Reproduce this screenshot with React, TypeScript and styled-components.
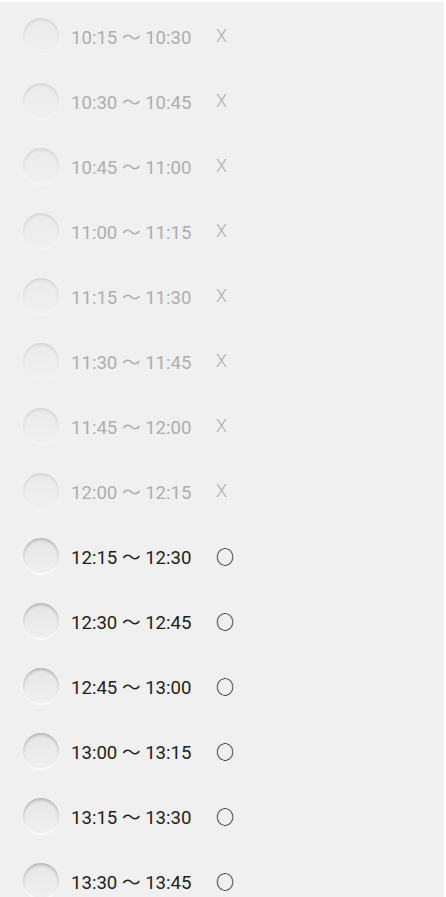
import React from "react";
import styled, { createGlobalStyle } from "styled-components";

const GlobalStyle = createGlobalStyle`
  html, body {
    margin: 0;
    padding: 0;
    background: #ffffff;
  }
  body {
    font-family: Roboto, "Noto Sans CJK JP", sans-serif;
  }
`;

const Page = styled.div`
  margin-top: 2px;
  width: 444px;
  height: 895px;
  overflow: hidden;
  background: #f0f0f0;
  padding-top: 1px;
  box-sizing: border-box;
`;

const SlotList = styled.ul`
  list-style: none;
  margin: 0;
  padding: 0 0 0 23px;
  display: flex;
  flex-direction: column;
`;

const SlotRow = styled.li<{ disabled?: boolean }>`
  height: 65px;
  display: flex;
  align-items: center;
  gap: 12px;
  color: ${({ disabled }) => (disabled ? "#aeaeae" : "#1e1e1e")};
`;

const Radio = styled.span<{ disabled?: boolean }>`
  flex: none;
  width: 36px;
  height: 36px;
  border-radius: 50%;
  background: linear-gradient(180deg, #e6e6e6 0%, #ececec 60%, #efefef 100%);
  box-shadow: inset 0 2px 3px rgba(0, 0, 0, 0.22),
    inset 0 -1px 1px rgba(255, 255, 255, 0.9), 0 1px 1px rgba(255, 255, 255, 1);
  opacity: ${({ disabled }) => (disabled ? 0.45 : 1)};
`;

const TimeText = styled.span`
  font-family: Roboto, "Noto Sans CJK JP", sans-serif;
  font-size: 18.6px;
  white-space: nowrap;
  width: 133px;
`;

const Mark = styled.span<{ disabled?: boolean }>`
  font-family: ${({ disabled }) =>
    disabled ? "Roboto, sans-serif" : '"Noto Sans CJK JP", sans-serif'};
  font-size: 18px;
  font-weight: ${({ disabled }) => (disabled ? 300 : 700)};
  line-height: 1;
`;

const slots = [
  ["10:15", "10:30", false],
  ["10:30", "10:45", false],
  ["10:45", "11:00", false],
  ["11:00", "11:15", false],
  ["11:15", "11:30", false],
  ["11:30", "11:45", false],
  ["11:45", "12:00", false],
  ["12:00", "12:15", false],
  ["12:15", "12:30", true],
  ["12:30", "12:45", true],
  ["12:45", "13:00", true],
  ["13:00", "13:15", true],
  ["13:15", "13:30", true],
  ["13:30", "13:45", true],
] as const;

export default function App() {
  return (
    <>
      <GlobalStyle />
      <Page>
        <SlotList>
          {slots.map(([from, to, open]) => (
            <SlotRow key={from} disabled={!open}>
              <Radio disabled={!open} />
              <TimeText>
                {from} ～ {to}
              </TimeText>
              <Mark disabled={!open}>{open ? "○" : "X"}</Mark>
            </SlotRow>
          ))}
        </SlotList>
      </Page>
    </>
  );
}
